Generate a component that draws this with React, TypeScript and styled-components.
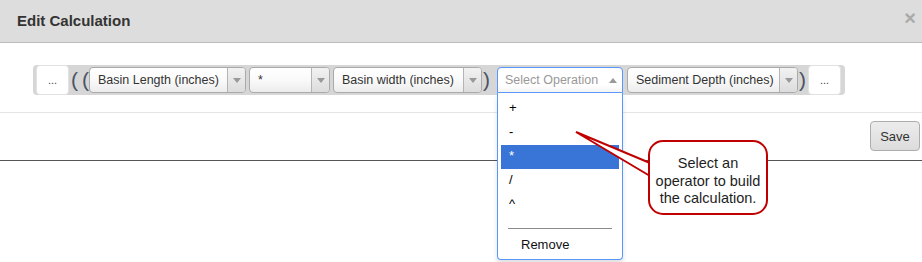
import React, { FC } from "react";
import styled, { createGlobalStyle } from "styled-components";

const GlobalStyle = createGlobalStyle`
  html, body {
    margin: 0;
    padding: 0;
    background: #fff;
  }
  body {
    font-family: "Liberation Sans", Arial, sans-serif;
  }
`;

const Dialog = styled.div`
  position: relative;
  width: 922px;
  height: 262px;
  overflow: hidden;
  background: #fff;
  font-family: "Liberation Sans", Arial, sans-serif;
`;

const Header = styled.div`
  height: 43px;
  box-sizing: border-box;
  border-bottom: 1px solid #bcbcbc;
  background: #dddddd;
  display: flex;
  align-items: center;
  justify-content: space-between;
  padding: 0 6px 2px 17px;
`;

const Title = styled.h3`
  margin: 0;
  font-size: 15px;
  font-weight: bold;
  color: #333;
`;

const Close = styled.span`
  font-size: 20px;
  font-weight: bold;
  color: #aaa;
  line-height: 1;
  margin-top: -4px;
`;

const Body = styled.div`
  padding: 22px 0 17px 33px;
  border-bottom: 1px solid #e5e5e5;
`;

const Bar = styled.div`
  display: inline-flex;
  align-items: center;
  height: 30px;
  padding: 0 4px 0 3px;
  background: #d6d6d6;
  border-radius: 4px;
`;

const DotsButton = styled.div<{ $ml?: number }>`
  width: 33px;
  height: 30px;
  box-sizing: border-box;
  margin-left: ${(p) => p.$ml || 0}px;
  background: #fff;
  border: 1px solid #e2e2e2;
  border-radius: 4px;
  display: flex;
  align-items: center;
  justify-content: center;
  font-size: 11px;
  color: #444;
`;

const Paren = styled.span<{ $ml?: number; $align?: string }>`
  width: 9px;
  margin-left: ${(p) => p.$ml || 0}px;
  text-align: ${(p) => p.$align || "center"};
  font-size: 21px;
  line-height: 30px;
  color: #4a5362;
`;

const SelectBox = styled.div<{ $w: number; $ml?: number; $open?: boolean }>`
  position: relative;
  width: ${(p) => p.$w}px;
  height: 26px;
  margin-left: ${(p) => p.$ml || 0}px;
  box-sizing: border-box;
  border: 1px solid ${(p) => (p.$open ? "#5897fb" : "#aaa")};
  border-radius: ${(p) => (p.$open ? "4px 4px 0 0" : "4px")};
  background: ${(p) =>
    p.$open
      ? "linear-gradient(to bottom, #fff 0%, #fff 70%, #f4f4f4 100%)"
      : "linear-gradient(to bottom, #fff 0%, #fafafa 50%, #ececec 100%)"};
  display: flex;
  align-items: stretch;
  font-size: 12.5px;
`;

const SelectLabel = styled.span<{ $placeholder?: boolean }>`
  flex: 1;
  padding-left: ${(p) => (p.$placeholder ? 7 : 8)}px;
  line-height: 24px;
  white-space: nowrap;
  overflow: hidden;
  color: ${(p) => (p.$placeholder ? "#999" : "#333")};
`;

const ArrowCell = styled.span<{ $open?: boolean }>`
  width: ${(p) => (p.$open ? 14 : 17)}px;
  display: flex;
  align-items: center;
  justify-content: center;
  border-left: ${(p) => (p.$open ? "none" : "1px solid #b4b4b4")};
  border-radius: 0 3px 3px 0;
  background: ${(p) =>
    p.$open ? "transparent" : "linear-gradient(to bottom, #f2f2f2, #dcdcdc)"};
  margin-right: ${(p) => (p.$open ? "2px" : "0")};
`;

const Triangle = styled.span<{ $up?: boolean }>`
  width: 0;
  height: 0;
  border-left: 4px solid transparent;
  border-right: 4px solid transparent;
  ${(p) =>
    p.$up ? "border-bottom: 5px solid #999;" : "border-top: 5px solid #999;"}
`;

const Dropdown = styled.div`
  position: absolute;
  top: 25px;
  left: -1px;
  right: -1px;
  height: 167px;
  box-sizing: border-box;
  border: 1px solid #5897fb;
  border-top: none;
  border-radius: 0 0 4px 4px;
  background: #fff;
  padding: 4px 3px 0;
  z-index: 5;
  box-shadow: 0 4px 5px rgba(0, 0, 0, 0.12);
`;

const Option = styled.div<{ $active?: boolean }>`
  height: 24px;
  line-height: 22px;
  padding-left: 8px;
  font-size: 13px;
  color: ${(p) => (p.$active ? "#fff" : "#000")};
  background: ${(p) => (p.$active ? "#3875d7" : "transparent")};
`;

const Separator = styled.div`
  height: 1px;
  margin: 11px 7px 0;
  background: #8a8a8a;
`;

const RemoveOption = styled.div`
  margin-top: 5px;
  height: 22px;
  line-height: 22px;
  padding-left: 20px;
  font-size: 13px;
  color: #111;
`;

const Footer = styled.div`
  height: 48px;
  box-sizing: border-box;
  display: flex;
  justify-content: flex-end;
  align-items: flex-start;
  padding: 8px 2px 0 0;
  border-bottom: 1px solid #555;
`;

const SaveButton = styled.button`
  width: 50px;
  height: 30px;
  box-sizing: border-box;
  border: 1px solid #adadad;
  border-radius: 4px;
  background: linear-gradient(to bottom, #ececec, #dcdcdc);
  font-family: "Liberation Sans", Arial, sans-serif;
  font-size: 13px;
  color: #333;
  padding: 0;
`;

const Callout = styled.div`
  position: absolute;
  left: 574px;
  top: 126px;
  z-index: 10;
`;

const Bubble = styled.div`
  position: absolute;
  left: 74px;
  top: 14px;
  width: 120px;
  height: 75px;
  box-sizing: border-box;
  border: 2px solid #c00000;
  border-radius: 15px;
  background: #fff;
  padding-top: 13px;
  text-align: center;
  font-size: 14.5px;
  line-height: 17.5px;
  color: #1e1e1e;
`;

const Pointer = styled.svg`
  position: absolute;
  left: 0;
  top: 0;
  overflow: visible;
`;

interface SelectProps {
  width: number;
  ml?: number;
  label: string;
}

const Select: FC<SelectProps> = ({ width, ml, label }) => (
  <SelectBox $w={width} $ml={ml}>
    <SelectLabel>{label}</SelectLabel>
    <ArrowCell>
      <Triangle />
    </ArrowCell>
  </SelectBox>
);

const operators = ["+", "-", "*", "/", "^"];

const OperationSelect: FC<{ ml?: number }> = ({ ml }) => (
  <SelectBox $w={126} $ml={ml} $open>
    <SelectLabel $placeholder>Select Operation</SelectLabel>
    <ArrowCell $open>
      <Triangle $up />
    </ArrowCell>
    <Dropdown>
      {operators.map((op) => (
        <Option key={op} $active={op === "*"}>
          {op}
        </Option>
      ))}
      <Separator />
      <RemoveOption>Remove</RemoveOption>
    </Dropdown>
  </SelectBox>
);

const App: FC = () => {
  return (
    <>
      <GlobalStyle />
      <Dialog>
        <Header>
          <Title>Edit Calculation</Title>
          <Close>×</Close>
        </Header>
        <Body>
          <Bar>
            <DotsButton>...</DotsButton>
            <Paren $ml={2} $align="left">(</Paren>
            <Paren $align="right">(</Paren>
            <Select width={157} label="Basin Length (inches)" />
            <Select width={81} ml={3} label="*" />
            <Select width={149} ml={3} label="Basin width (inches)" />
            <Paren>)</Paren>
            <OperationSelect ml={6} />
            <Select width={171} ml={4} label="Sediment Depth (inches)" />
            <Paren>)</Paren>
            <DotsButton $ml={1}>...</DotsButton>
          </Bar>
        </Body>
        <Footer>
          <SaveButton type="button">Save</SaveButton>
        </Footer>
        <Callout>
          <Pointer width="80" height="60">
            <polygon points="2,6 77,37 77,50" fill="#fff" />
            <polyline
              points="76,37 2,6 76,50"
              fill="none"
              stroke="#c00000"
              strokeWidth="2"
              strokeLinejoin="miter"
            />
          </Pointer>
          <Bubble>
            Select an
            <br />
            operator to build
            <br />
            the calculation.
          </Bubble>
        </Callout>
      </Dialog>
    </>
  );
};

export default App;
